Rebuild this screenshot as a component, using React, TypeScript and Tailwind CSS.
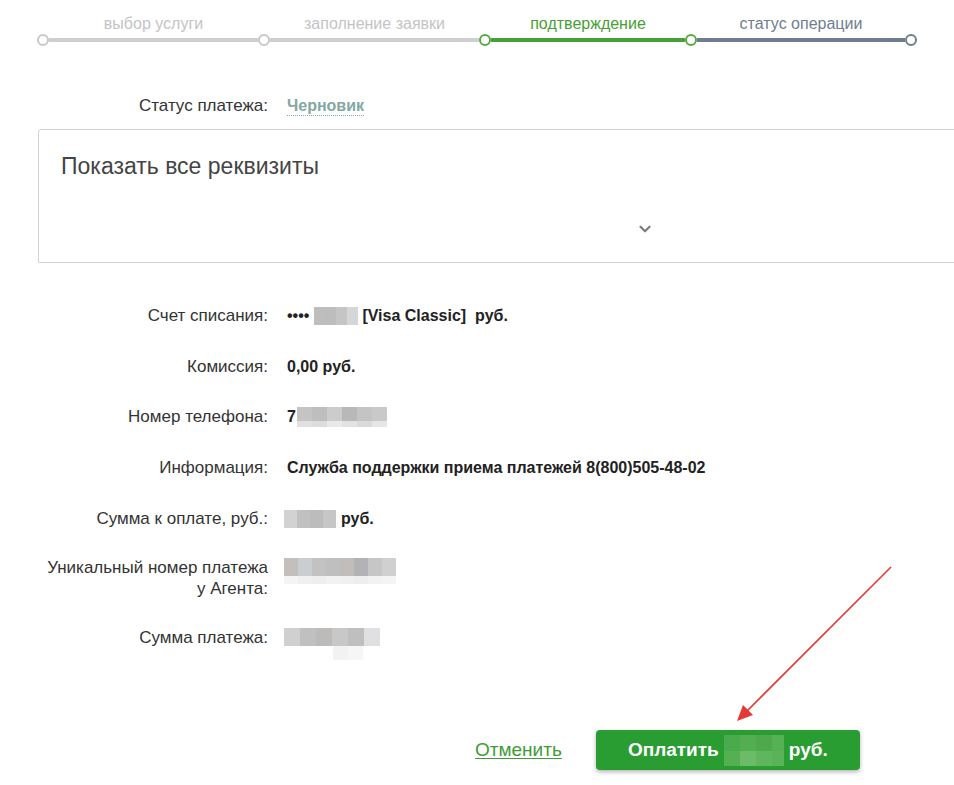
import { ChevronDown } from 'lucide-react'

const steps = [
  { label: 'выбор услуги', width: 221, text: 'text-[#c4c4c4]', line: 'bg-[#cfcfcf]' },
  { label: 'заполнение заявки', width: 221, text: 'text-[#c4c4c4]', line: 'bg-[#cfcfcf]' },
  { label: 'подтверждение', width: 206, text: 'text-[#46a035]', line: 'bg-[#46a035]' },
  { label: 'статус операции', width: 220, text: 'text-[#6f7e8e]', line: 'bg-[#6f7e8e]' },
]

function Blur({ cells, className, cell = 15 }: { cells: string[]; className?: string; cell?: number }) {
  return (
    <span className={'inline-flex ' + (className ?? '')}>
      {cells.map((c, i) => (
        <span key={i} className="h-full" style={{ background: c, width: cell }} />
      ))}
    </span>
  )
}

function Row({ label, children, className }: { label: React.ReactNode; children: React.ReactNode; className?: string }) {
  return (
    <div className={'flex items-start ' + (className ?? '')}>
      <div className="w-[268px] shrink-0 text-right text-[17px] leading-[21px] text-[#333]">{label}</div>
      <div className="ml-[19px] flex h-[21px] items-center text-[16px] font-bold leading-[21px] text-[#222]">{children}</div>
    </div>
  )
}

export default function App() {
  return (
    <div
      className="relative h-[785px] w-[954px] overflow-hidden bg-white"
      style={{ fontFamily: '"Liberation Sans", Arial, sans-serif' }}
    >
      {/* stepper */}
      <div className="pl-[43px] pt-[14px]">
        <div className="flex">
          {steps.map((s) => (
            <div
              key={s.label}
              className={'text-center text-[16px] leading-[20px] ' + s.text}
              style={{ width: s.width }}
            >
              {s.label}
            </div>
          ))}
        </div>
        <div className="-ml-[6px] flex items-center">
          {steps.map((s, i) => (
            <div key={s.label} className="flex items-center">
              <span
                className={
                  'h-[12px] w-[12px] shrink-0 rounded-full border-[2.5px] bg-white ' +
                  (i < 2 ? 'border-[#c8c8c8]' : 'border-[#5aa845]')
                }
              />
              <span className={'h-[4px] ' + s.line} style={{ width: s.width - 12 }} />
            </div>
          ))}
          <span className="h-[12px] w-[12px] shrink-0 rounded-full border-[2.5px] border-[#6f7e8e] bg-white" />
        </div>
      </div>

      {/* status */}
      <div className="mt-[49px] flex items-center">
        <div className="w-[268px] text-right text-[17px] leading-[21px] text-[#333]">Статус платежа:</div>
        <span className="ml-[19px] border-b border-dotted border-[#8aa9a4] text-[16px] font-bold leading-[19px] text-[#82a8a2]">
          Черновик
        </span>
      </div>

      {/* requisites box */}
      <div className="ml-[38px] mt-[13px] flex h-[134px] w-[940px] flex-col rounded-tl-[3px] border border-[#d2d2d2] bg-white">
        <div className="pl-[22px] pt-[22px] text-[23px] leading-[28px] text-[#444]">Показать все реквизиты</div>
        <div className="mt-auto mb-[24px] pl-[597px]">
          <ChevronDown className="h-[18px] w-[18px] text-[#7d7d7d]" strokeWidth={3} />
        </div>
      </div>

      {/* details */}
      <div className="mt-[42px] flex flex-col">
        <Row label="Счет списания:">
          <span>••••</span>
          <Blur cells={['#c0bebc', '#bdbdbd', '#c5c5c5', '#d4d6d8']} cell={11} className="ml-[5px] h-[18px]" />
          <span className="ml-[4px] whitespace-pre">[Visa Classic]  руб.</span>
        </Row>
        <Row label="Комиссия:" className="mt-[30px]">
          0,00 руб.
        </Row>
        <Row label="Номер телефона:" className="mt-[29px]">
          <span>7</span>
          <span className="ml-[1px] inline-flex flex-col">
            <Blur cells={['#c4c4c4', '#bebebe', '#cccccc', '#b8b8b8', '#c4c4c4', '#c9c9c9']} className="h-[14px]" />
            <Blur cells={['#e0e0e0', '#dcdcdc', '#e8eaea', '#e2e2e2', '#dadada', '#e6e6e6']} className="h-[6px]" />
          </span>
        </Row>
        <Row label="Информация:" className="mt-[30px]">
          Служба поддержки приема платежей 8(800)505-48-02
        </Row>
        <Row label="Сумма к оплате, руб.:" className="mt-[30px]">
          <Blur cells={['#d2d2d2', '#c0c0c0', '#bcbcbc', '#c6c6c6']} cell={13} className="-ml-[3px] h-[18px]" />
          <span className="ml-[5px]">руб.</span>
        </Row>
        <Row
          label={
            <>
              Уникальный номер платежа
              <br />у Агента:
            </>
          }
          className="mt-[28px]"
        >
          <span className="-ml-[3px] inline-flex flex-col self-start pt-[1px]">
            <Blur cells={['#c2bfbd', '#cbced0', '#c2c2c2', '#bfbfbf', '#c0bdba', '#b3b3b5', '#c6c6c6', '#d0d0d0']} cell={14} className="h-[18px]" />
            <Blur cells={['#f4f4f4', '#f0f0f0', '#eeeeee', '#f2f2f2', '#f0f0f0', '#eeeeee', '#f2f2f2', '#f4f4f4']} cell={14} className="h-[8px]" />
          </span>
        </Row>
        <Row label="Сумма платежа:" className="mt-[28px]">
          <span className="-ml-[3px] inline-flex flex-col self-start pt-[1px]">
            <Blur cells={['#d0d0d0', '#c0c0c0', '#bdbbb9', '#c8c8c8', '#bfbfbf', '#e0e0e2']} cell={16} className="h-[18px]" />
            <span className="ml-[49px] flex h-[14px]">
              <span className="w-[15px] bg-[#f2f2f2]" />
              <span className="w-[15px] bg-[#f6f6f6]" />
            </span>
          </span>
        </Row>
      </div>

      {/* actions */}
      <div className="mt-[82px] flex items-center pl-[475px]">
        <a href="#" className="text-[19px] leading-[22px] text-[#3f9c35] underline underline-offset-2">
          Отменить
        </a>
        <button className="ml-[34px] flex h-[40px] w-[264px] items-center justify-center rounded-[4px] bg-[#2a9d32] text-[19px] font-bold text-white shadow-[0_2px_4px_rgba(0,0,0,0.3)]">
          Оплатить
          <span className="mx-[5px] inline-flex h-[31px] flex-col">
            <span className="flex h-[16px]">
              <span className="w-[16px] bg-[#4aab4c]" />
              <span className="w-[16px] bg-[#52ae50]" />
              <span className="w-[16px] bg-[#4daa4c]" />
              <span className="w-[12px] bg-[#56b054]" />
            </span>
            <span className="flex h-[15px]">
              <span className="w-[16px] bg-[#55b054]" />
              <span className="w-[16px] bg-[#6bbb69]" />
              <span className="w-[16px] bg-[#60b65e]" />
              <span className="w-[12px] bg-[#5bb359]" />
            </span>
          </span>
          руб.
        </button>
      </div>

      {/* annotation arrow */}
      <svg className="pointer-events-none absolute left-0 top-0" width="954" height="785">
        <line x1="891" y1="567" x2="744" y2="714" stroke="#e53935" strokeWidth="1.6" />
        <polygon points="737,721 743,705 753,715" fill="#e53935" />
      </svg>
    </div>
  )
}
